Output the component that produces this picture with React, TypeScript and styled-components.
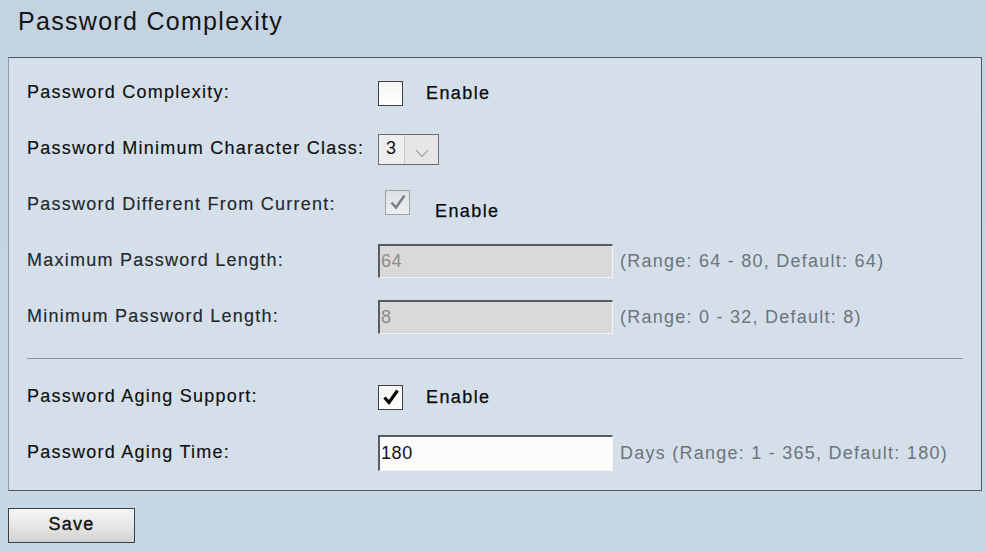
import styled, { createGlobalStyle } from 'styled-components';

const GlobalStyle = createGlobalStyle`
  html, body {
    margin: 0;
    padding: 0;
    background: #c5d4e2;
  }
  body {
    font-family: 'Liberation Sans', Arial, sans-serif;
    color: #111;
  }
`;

const Page = styled.div`
  width: 986px;
  height: 552px;
  background: linear-gradient(180deg, #c3d3e1 0%, #c8d7e4 100%);
  overflow: hidden;
`;

const Title = styled.h1`
  margin: 0;
  padding: 6px 0 0 18px;
  height: 57px;
  box-sizing: border-box;
  font-size: 25px;
  line-height: 30px;
  font-weight: normal;
  letter-spacing: 1.3px;
  color: #141414;
`;

const Panel = styled.section`
  margin: 0 4px 0 8px;
  padding: 7px 0 9px;
  background: #d4dfe9;
  border: 1px solid #4e5965;
  border-left-color: #8d99a5;
`;

const Row = styled.div`
  display: grid;
  grid-template-columns: 351px 1fr;
  align-items: center;
  height: 56px;
  padding-left: 18px;
`;

const Label = styled.span<{ $muted?: boolean }>`
  font-size: 18px;
  letter-spacing: 1.25px;
  padding-bottom: 2px;
  -webkit-text-stroke: 0.15px currentColor;
  color: ${({ $muted }) => ($muted ? '#23272b' : '#0e0e0e')};
`;

const Controls = styled.div`
  display: flex;
  align-items: center;
`;

const Box = styled.span<{ $disabled?: boolean; $shift?: number }>`
  display: inline-flex;
  align-items: center;
  justify-content: center;
  width: 25px;
  height: 25px;
  box-sizing: border-box;
  margin-left: ${({ $shift }) => $shift ?? 0}px;
  margin-bottom: ${({ $disabled }) => ($disabled ? '6px' : '0')};
  border: 1px solid ${({ $disabled }) => ($disabled ? '#9ea3a8' : '#3d3f41')};
  background: ${({ $disabled }) =>
    $disabled ? 'linear-gradient(180deg, #dfe2e5, #eceeef)' : 'linear-gradient(180deg, #f4f4f4, #ffffff)'};
`;

const Caption = styled.span<{ $gap: number; $drop?: boolean }>`
  margin-left: ${({ $gap }) => $gap}px;
  margin-top: ${({ $drop }) => ($drop ? '12px' : '0')};
  font-size: 18px;
  letter-spacing: 1.4px;
  -webkit-text-stroke: 0.25px currentColor;
  color: #0a0a0a;
`;

const Select = styled.div`
  display: flex;
  width: 61px;
  height: 31px;
  box-sizing: border-box;
  border: 1px solid #6a6e72;
  background: #ececec;
`;

const SelectValue = styled.span`
  width: 26px;
  padding-left: 7px;
  box-sizing: border-box;
  font-size: 18px;
  line-height: 26px;
  border-right: 1px solid #c9c9c9;
  background: #eeeeee;
`;

const SelectArrow = styled.span`
  flex: 1;
  display: flex;
  align-items: flex-end;
  justify-content: center;
  padding-bottom: 6px;
  background: #e6e6e6;
`;

const Field = styled.div<{ $disabled?: boolean; $tall?: boolean }>`
  width: 235px;
  height: ${({ $tall }) => ($tall ? '36px' : '34px')};
  box-sizing: border-box;
  padding-left: 1px;
  display: flex;
  align-items: center;
  border-top: 2px solid #5a5d60;
  border-left: 2px solid #5a5d60;
  border-right: 1px solid #f2f4f5;
  border-bottom: 1px solid #f2f4f5;
  background: ${({ $disabled }) => ($disabled ? '#d9d9d9' : '#fbfbfb')};
  font-size: 18px;
  letter-spacing: 0.6px;
  color: ${({ $disabled }) => ($disabled ? '#8c8c8c' : '#111')};
`;

const Hint = styled.span`
  margin-left: 7px;
  font-size: 18px;
  letter-spacing: 1.25px;
  color: #6c747c;
`;

const Divider = styled.hr`
  margin: 13px 18px 10px;
  border: 0;
  height: 1px;
  background: #8793a0;
`;

const SaveButton = styled.button`
  margin: 17px 0 0 8px;
  width: 127px;
  height: 35px;
  border: 1px solid #3b3e42;
  background: linear-gradient(180deg, #f6f6f6 0%, #e4e4e4 55%, #d2d2d2 100%);
  font-family: 'Liberation Sans', Arial, sans-serif;
  font-size: 18px;
  letter-spacing: 1.3px;
  -webkit-text-stroke: 0.35px currentColor;
  color: #111;
  padding: 0 0 3px;
`;

const Check = ({ color, weight }: { color: string; weight: number }) => (
  <svg width="18" height="18" viewBox="0 0 18 18">
    <path d="M2.5 9.5 L7 14.5 L15.5 2.5" fill="none" stroke={color} strokeWidth={weight} strokeLinejoin="miter" />
  </svg>
);

const Chevron = () => (
  <svg width="14" height="9" viewBox="0 0 14 9">
    <path d="M1 1 L7 7.5 L13 1" fill="none" stroke="#a8a8a8" strokeWidth="1.2" />
  </svg>
);

export default function App() {
  return (
    <Page>
      <GlobalStyle />
      <Title>Password Complexity</Title>
      <Panel>
        <Row>
          <Label>Password Complexity:</Label>
          <Controls>
            <Box />
            <Caption $gap={23}>Enable</Caption>
          </Controls>
        </Row>
        <Row>
          <Label>Password Minimum Character Class:</Label>
          <Controls>
            <Select>
              <SelectValue>3</SelectValue>
              <SelectArrow>
                <Chevron />
              </SelectArrow>
            </Select>
          </Controls>
        </Row>
        <Row>
          <Label $muted>Password Different From Current:</Label>
          <Controls>
            <Box $disabled $shift={7}>
              <Check color="#7d8185" weight={2.6} />
            </Box>
            <Caption $gap={25} $drop>Enable</Caption>
          </Controls>
        </Row>
        <Row>
          <Label $muted>Maximum Password Length:</Label>
          <Controls>
            <Field $disabled>64</Field>
            <Hint>(Range: 64 - 80, Default: 64)</Hint>
          </Controls>
        </Row>
        <Row>
          <Label $muted>Minimum Password Length:</Label>
          <Controls>
            <Field $disabled>8</Field>
            <Hint>(Range: 0 - 32, Default: 8)</Hint>
          </Controls>
        </Row>
        <Divider />
        <Row>
          <Label>Password Aging Support:</Label>
          <Controls>
            <Box>
              <Check color="#050505" weight={3.2} />
            </Box>
            <Caption $gap={23}>Enable</Caption>
          </Controls>
        </Row>
        <Row>
          <Label>Password Aging Time:</Label>
          <Controls>
            <Field $tall>180</Field>
            <Hint>Days (Range: 1 - 365, Default: 180)</Hint>
          </Controls>
        </Row>
      </Panel>
      <SaveButton>Save</SaveButton>
    </Page>
  );
}
